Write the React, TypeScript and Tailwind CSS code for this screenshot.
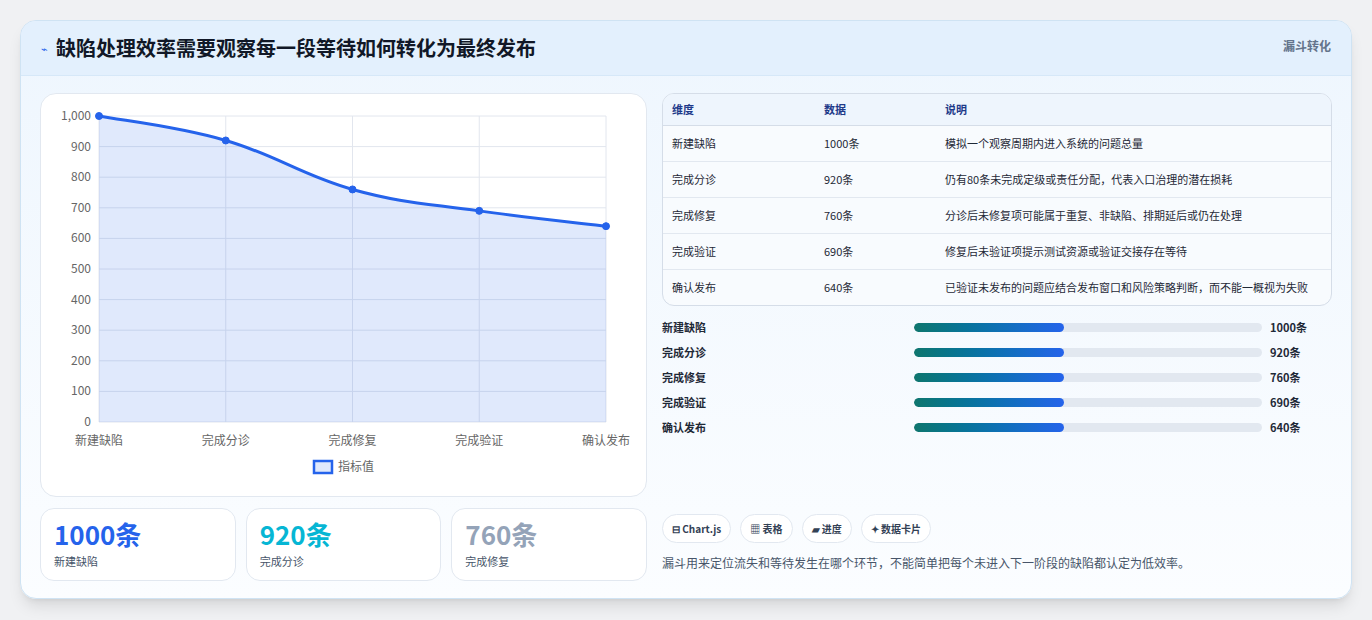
import React from "react";

const rows = [
  ["新建缺陷", "1000条", "模拟一个观察周期内进入系统的问题总量"],
  ["完成分诊", "920条", "仍有80条未完成定级或责任分配，代表入口治理的潜在损耗"],
  ["完成修复", "760条", "分诊后未修复项可能属于重复、非缺陷、排期延后或仍在处理"],
  ["完成验证", "690条", "修复后未验证项提示测试资源或验证交接存在等待"],
  ["确认发布", "640条", "已验证未发布的问题应结合发布窗口和风险策略判断，而不能一概视为失败"],
];

function Chart() {
  const L = 58, T = 22, W = 507, H = 306;
  const vals = [1000, 920, 760, 690, 640];
  const pts = vals.map((v, i) => [L + (W / 4) * i, T + H * (1 - v / 1000)]);
  let d = `M${pts[0][0]},${pts[0][1]}`;
  for (let i = 0; i < pts.length - 1; i++) {
    const p0 = pts[i - 1] || pts[i], p1 = pts[i], p2 = pts[i + 1], p3 = pts[i + 2] || p2;
    const t = 0.4 / 2;
    const c1 = [p1[0] + (p2[0] - p0[0]) * t, p1[1] + (p2[1] - p0[1]) * t];
    const c2 = [p2[0] - (p3[0] - p1[0]) * t, p2[1] - (p3[1] - p1[1]) * t];
    d += ` C${c1[0]},${c1[1]} ${c2[0]},${c2[1]} ${p2[0]},${p2[1]}`;
  }
  const area = d + ` L${L + W},${T + H} L${L},${T + H} Z`;
  const labels = ["新建缺陷", "完成分诊", "完成修复", "完成验证", "确认发布"];
  return (
    <svg width="606" height="401" viewBox="0 0 606 401" style={{ fontFamily: "'Noto Sans CJK SC', sans-serif" }}>
      {Array.from({ length: 11 }).map((_, i) => {
        const y = T + (H / 10) * i;
        return (
          <g key={i}>
            <line x1={L} x2={L + W} y1={y} y2={y} stroke="#e2e6ee" />
            <text x={L - 8} y={y + 4} textAnchor="end" fontSize="12" fill="#666">
              {(1000 - i * 100).toLocaleString("en-US")}
            </text>
          </g>
        );
      })}
      {pts.map((p, i) => (
        <line key={i} x1={p[0]} x2={p[0]} y1={T} y2={T + H} stroke="#e2e6ee" />
      ))}
      <path d={area} fill="rgba(37,99,235,0.14)" />
      <path d={d} fill="none" stroke="#2563eb" strokeWidth="3" />
      {pts.map((p, i) => (
        <circle key={i} cx={p[0]} cy={p[1]} r="3.5" fill="#2563eb" stroke="#2563eb" />
      ))}
      {labels.map((l, i) => (
        <text key={l} x={pts[i][0]} y={351} textAnchor="middle" fontSize="12" fill="#666">{l}</text>
      ))}
      <rect x="273" y="367" width="18" height="12" fill="rgba(37,99,235,0.14)" stroke="#2563eb" strokeWidth="2.5" />
      <text x="297" y="377" fontSize="12" fill="#666">指标值</text>
    </svg>
  );
}

export default function App() {
  return (
    <div className="w-[1372px] h-[620px] bg-[#f0f1f3] pt-[20px] px-[20px]" style={{ fontFamily: "'Noto Sans CJK SC', sans-serif" }}>
      <div className="h-[579px] rounded-[16px] border border-[#cfe3f3] bg-gradient-to-b from-[#eef6fe] to-[#fbfdff] overflow-hidden shadow-lg">
        <div className="h-[55px] bg-[#e3f0fd] border-b border-[#d6e8f8] flex items-center justify-between px-[20px]">
          <div className="flex items-center gap-[8px]">
            <span className="text-[#2563eb] text-[11px]">⌁</span>
            <span className="text-[20px] font-bold text-[#111827]">缺陷处理效率需要观察每一段等待如何转化为最终发布</span>
          </div>
          <span className="text-[12px] font-bold text-[#64748b] self-start mt-[16px]">漏斗转化</span>
        </div>
        <div className="flex gap-[15px] px-[19px] pt-[17px]">
          <div className="w-[607px] flex flex-col gap-[11px]">
            <div className="h-[404px] rounded-[16px] border border-[#e2e8f0] bg-white">
              <Chart />
            </div>
            <div className="flex gap-[10px]">
              {[
                ["1000条", "新建缺陷", "text-[#2563eb]"],
                ["920条", "完成分诊", "text-[#06b6d4]"],
                ["760条", "完成修复", "text-[#94a3b8]"],
              ].map(([v, l, c]) => (
                <div key={l} className="w-[196px] h-[73px] rounded-[14px] border border-[#e2e8f0] bg-white px-[13px] pt-[8px]">
                  <div className={`text-[26px] font-bold leading-[34px] ${c}`}>{v}</div>
                  <div className="text-[11px] text-[#475569] mt-[2px]">{l}</div>
                </div>
              ))}
            </div>
          </div>
          <div className="flex-1 flex flex-col">
            <div className="rounded-[12px] border border-[#d5dde8] bg-[#f8fbfe] overflow-hidden">
              <div className="flex h-[32px] items-center bg-[#eef5fd] border-b border-[#d5dde8] text-[11px] font-bold text-[#1e3a8a]">
                <div className="w-[161px] pl-[9px]">维度</div>
                <div className="w-[121px]">数据</div>
                <div className="flex-1">说明</div>
              </div>
              {rows.map((r, i) => (
                <div key={i} className={`flex py-[9px] text-[11px] text-[#1f2937] leading-[17px] ${i < 4 ? "border-b border-[#e2e8f0]" : ""}`}>
                  <div className="w-[161px] pl-[9px]">{r[0]}</div>
                  <div className="w-[121px]">{r[1]}</div>
                  <div className="flex-1 pr-[12px]">{r[2]}</div>
                </div>
              ))}
            </div>
            <div className="flex flex-col gap-[7px] mt-[12px]">
              {rows.map((r) => (
                <div key={r[0]} className="flex items-center h-[18px] text-[11px] font-bold text-[#1f2937]">
                  <div className="w-[252px]">{r[0]}</div>
                  <div className="w-[348px] h-[9px] rounded-full bg-[#e2e8f0] overflow-hidden">
                    <div className="h-full w-[150px] rounded-full bg-gradient-to-r from-[#0f766e] to-[#2563eb]" />
                  </div>
                  <div className="ml-[8px]">{r[1]}</div>
                </div>
              ))}
            </div>
            <div className="flex gap-[9px] mt-[78px]">
              {["⊟ Chart.js", "▦ 表格", "▰ 进度", "✦ 数据卡片"].map((t) => (
                <span key={t} className="h-[29px] px-[9px] rounded-full border border-[#e2e8f0] bg-white flex items-center text-[10px] font-bold text-[#334155]">{t}</span>
              ))}
            </div>
            <div className="mt-[11px] text-[12px] text-[#475569]">漏斗用来定位流失和等待发生在哪个环节，不能简单把每个未进入下一阶段的缺陷都认定为低效率。</div>
          </div>
        </div>
      </div>
    </div>
  );
}
